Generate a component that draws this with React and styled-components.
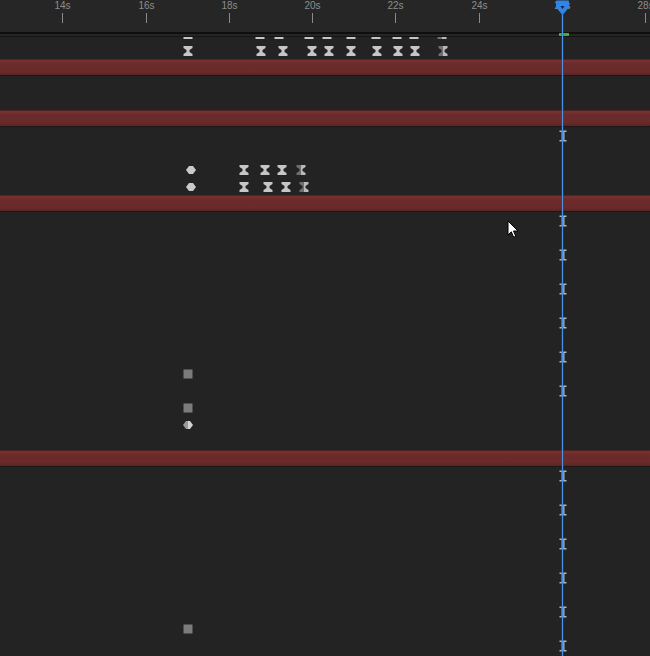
import React from "react";
import styled, { createGlobalStyle } from "styled-components";

const GlobalStyle = createGlobalStyle`
  html, body {
    margin: 0;
    padding: 0;
    background: #232323;
  }
  body {
    font-family: "Liberation Sans", Arial, sans-serif;
  }
`;

// time -> x on the canvas (2s = 83.3px, playhead sits at 26s)
const PX_PER_SEC = 41.65;
const PLAYHEAD_T = 26;
const PLAYHEAD_X = 562;
const tx = (t) => PLAYHEAD_X + (t - PLAYHEAD_T) * PX_PER_SEC;

const Timeline = styled.div`
  position: relative;
  width: 650px;
  height: 656px;
  overflow: hidden;
  background: #232323;
`;

const Ruler = styled.div`
  position: relative;
  height: 32px;
  background: #262626;
`;

const Tick = styled.div`
  position: absolute;
  top: 0;
  width: 0;
  display: flex;
  flex-direction: column;
  align-items: center;
  color: #8d8d8d;
  font-size: 10px;
  line-height: 10px;

  & > span {
    margin-top: 1px;
    white-space: nowrap;
  }
  & > i {
    display: block;
    width: 1px;
    height: 10px;
    margin-top: 2px;
    background: #8a8a8a;
  }
`;

const Divider = styled.div`
  position: relative;
  height: 5px;
  background: #262626;
  border-top: 2px solid #0e0e0e;
  border-bottom: 1px solid #141414;
  box-sizing: border-box;
`;

const WorkArea = styled.div`
  position: absolute;
  left: 559px;
  top: -1px;
  width: 10px;
  height: 3px;
  background: #3fae3f;
`;

const Tracks = styled.div`
  height: 619px;
  overflow: hidden;
`;

const TrackList = styled.div`
  margin-top: -12px;
  display: flex;
  flex-direction: column;
`;

const Row = styled.div`
  position: relative;
  height: 17px;
  flex: none;
  ${(p) =>
    p.$layer &&
    `
    box-sizing: border-box;
    background: linear-gradient(#7a3232, #6c2b2b 25%, #6a2a2a 75%, #5a2525);
    border-top: 1px solid #4d2323;
    border-bottom: 1px solid #1c1616;
  `}
`;

const Key = styled.svg`
  position: absolute;
  top: 50%;
  transform: translate(-50%, -50%);
  overflow: visible;
`;

const Playhead = styled.div`
  position: absolute;
  left: ${PLAYHEAD_X}px;
  top: 14px;
  bottom: 0;
  width: 1px;
  background: #4b92e4;
  box-shadow: 0 0 0 0.5px rgba(40, 90, 160, 0.6);
  pointer-events: none;
`;

const PlayheadHead = styled.svg`
  position: absolute;
  left: ${PLAYHEAD_X - 8}px;
  top: 0;
  pointer-events: none;
`;

const Cursor = styled.svg`
  position: absolute;
  left: 507px;
  top: 220px;
  pointer-events: none;
`;

function Hourglass({ x, half }) {
  return (
    <Key width="9" height="10" viewBox="0 0 9 10" style={{ left: x }}>
      {half ? (
        <>
          <polygon points="0,0 4.5,0 4.5,10 0,10 0,8 3,6 3,4 0,2" fill="#6f6f6f" />
          <polygon points="4.5,0 9,0 9,2 6,4 6,6 9,8 9,10 4.5,10" fill="#b9b9b9" />
        </>
      ) : (
        <polygon
          points="0,0 9,0 9,2 6,4 6,6 9,8 9,10 0,10 0,8 3,6 3,4 0,2"
          fill="#c6c6c6"
        />
      )}
    </Key>
  );
}

function Diamond({ x, half }) {
  return (
    <Key width="10" height="8" viewBox="0 0 10 8" style={{ left: x }}>
      {half ? (
        <>
          <polygon points="0,4 3,0 5,0 5,8 3,8" fill="#9a9a9a" />
          <polygon points="5,0 7,0 10,4 7,8 5,8" fill="#d2d2d2" />
        </>
      ) : (
        <polygon points="0,4 3,0 7,0 10,4 7,8 3,8" fill="#cacaca" />
      )}
    </Key>
  );
}

function Hold({ x }) {
  return (
    <Key width="9" height="9" viewBox="0 0 9 9" style={{ left: x }}>
      <rect width="9" height="9" fill="#7c7c7c" />
    </Key>
  );
}

function Beam({ x }) {
  return (
    <Key width="7" height="11" viewBox="0 0 7 11" style={{ left: x }}>
      <path d="M0 0h7v1.6H5v7.8h2V11H0V9.4h2V1.6H0z" fill="#a7b7cc" />
    </Key>
  );
}

const K = {
  h: Hourglass,
  hh: (p) => <Hourglass {...p} half />,
  d: Diamond,
  dh: (p) => <Diamond {...p} half />,
  s: Hold,
  i: Beam,
};

const AT_PLAYHEAD = [["i", PLAYHEAD_X + 0.5]];

// each row: "layer" bar, or a list of [kind, x]
const rows = [
  [["h", 188], ["h", 260], ["h", 279], ["h", 309], ["h", 327], ["h", 351], ["h", 376], ["h", 397], ["h", 414], ["hh", 442]],
  [["h", 188], ["h", 261], ["h", 283], ["h", 312], ["h", 329], ["h", 351], ["h", 377], ["h", 398], ["h", 415], ["hh", 443]],
  "layer",
  [],
  [],
  "layer",
  AT_PLAYHEAD,
  [],
  [["d", 190.5], ["h", 243.5], ["h", 264.5], ["h", 281.5], ["hh", 300.5]],
  [["d", 190.5], ["h", 243.5], ["h", 267.5], ["h", 285.5], ["hh", 303.5]],
  "layer",
  AT_PLAYHEAD,
  [],
  AT_PLAYHEAD,
  [],
  AT_PLAYHEAD,
  [],
  AT_PLAYHEAD,
  [],
  AT_PLAYHEAD,
  [["s", 187.5]],
  AT_PLAYHEAD,
  [["s", 187.5]],
  [["dh", 187.5]],
  [],
  "layer",
  AT_PLAYHEAD,
  [],
  AT_PLAYHEAD,
  [],
  AT_PLAYHEAD,
  [],
  AT_PLAYHEAD,
  [],
  AT_PLAYHEAD,
  [["s", 187.5]],
  AT_PLAYHEAD,
  [],
];

const seconds = [14, 16, 18, 20, 22, 24, 26, 28];

export default function App() {
  return (
    <>
      <GlobalStyle />
      <Timeline>
        <Ruler>
          {seconds.map((s) => (
            <Tick key={s} style={{ left: Math.round(tx(s)) + 0.5 }}>
              <span>{s}s</span>
              <i />
            </Tick>
          ))}
        </Ruler>
        <Divider>
          <WorkArea />
        </Divider>
        <Tracks>
          <TrackList>
            {rows.map((r, idx) =>
              r === "layer" ? (
                <Row key={idx} $layer />
              ) : (
                <Row key={idx}>
                  {r.map(([kind, x], j) => {
                    const Shape = K[kind];
                    return <Shape key={j} x={x} />;
                  })}
                </Row>
              )
            )}
          </TrackList>
        </Tracks>

        <Playhead />
        <PlayheadHead width="17" height="17" viewBox="0 0 17 17">
          <path
            d="M2 1.5 Q2 0.5 3 0.5 H14 Q15 0.5 15 1.5 V7.5 L8.5 15 L2 7.5 Z"
            fill="#2f84e6"
          />
          <path d="M6.5 6 H10.5 L8.5 9 Z" fill="#10243f" />
        </PlayheadHead>

        <Cursor width="13" height="19" viewBox="0 0 13 19">
          <path
            d="M1 1 L1 15 L4.3 11.8 L6.6 17.2 L8.8 16.3 L6.5 11 L11 11 Z"
            fill="#ffffff"
            stroke="#000000"
            strokeWidth="1"
            strokeLinejoin="round"
          />
        </Cursor>
      </Timeline>
    </>
  );
}
